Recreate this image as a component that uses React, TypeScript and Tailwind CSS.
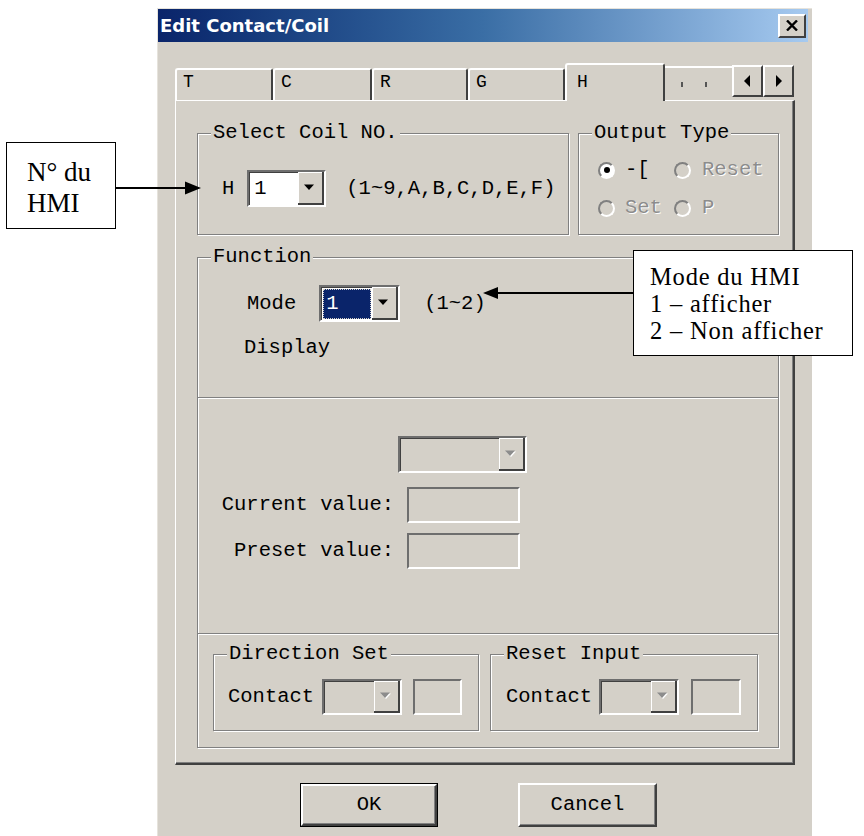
import React from "react";

// Win classic style dialog + two annotation callouts

const etched = "text-[#8c8c8c] [text-shadow:1px_1px_0_#fff]";

function DownArrow({ disabled }: { disabled?: boolean }) {
  return (
    <svg width="12" height="8" viewBox="0 0 12 8">
      {disabled && <path d="M1 1.5h10L6 7z" fill="#fff" />}
      <path d="M0 0.5h10L5 6z" fill={disabled ? "#8c8c8c" : "#000"} />
    </svg>
  );
}

function Combo({
  size,
  value,
  selected,
  disabled,
}: {
  size: string;
  value?: string;
  selected?: boolean;
  disabled?: boolean;
}) {
  return (
    <div
      className={`flex border-2 border-t-[#6e6e6e] border-l-[#6e6e6e] border-r-white border-b-white ${size}`}
    >
      <div
        className={`flex flex-1 items-stretch border-t border-l border-[#404040] p-[1px] ${
          disabled ? "bg-[#d4d0c8]" : "bg-white"
        }`}
      >
        {value && (
          <span
            className={`flex w-full items-center pl-[3px] ${
              selected ? "bg-[#0a246a] text-white outline-1 outline-dotted outline-[#d4d0c8] -outline-offset-1" : ""
            }`}
          >
            {value}
          </span>
        )}
      </div>
      <div className="flex w-[26px] items-center justify-center border-r-2 border-b-2 border-r-[#404040] border-b-[#404040] bg-[#d4d0c8] shadow-[inset_1px_1px_0_#fff]">
        <DownArrow disabled={disabled} />
      </div>
    </div>
  );
}

function TextBox({ size }: { size: string }) {
  return (
    <div
      className={`border-2 border-t-[#6e6e6e] border-l-[#6e6e6e] border-r-white border-b-white bg-[#d4d0c8] ${size}`}
    />
  );
}

function Radio({ checked }: { checked?: boolean }) {
  return (
    <span
      className={`flex h-[17px] w-[17px] shrink-0 items-center justify-center rounded-full border-2 border-t-[#808080] border-l-[#808080] border-r-white border-b-white ${
        checked ? "bg-white" : "bg-[#d4d0c8]"
      }`}
    >
      {checked && <span className="h-[6px] w-[6px] rounded-full bg-black" />}
    </span>
  );
}

function Group({
  label,
  className,
  children,
}: {
  label: string;
  className: string;
  children?: React.ReactNode;
}) {
  return (
    <div
      className={`flex flex-col border border-[#808080] shadow-[inset_1px_1px_0_#fff,1px_1px_0_#fff] ${className}`}
    >
      <div className="-mt-[11px] ml-[13px] h-[20px] w-fit bg-[#d4d0c8] px-[2px]">
        {label}
      </div>
      {children}
    </div>
  );
}

function Tab({ label, width }: { label: string; width: string }) {
  return (
    <div
      className={`h-[32px] rounded-t-[3px] border-t-2 border-l-2 border-r-2 border-t-white border-l-white border-r-[#404040] pl-[6px] pt-[2px] text-[18px] ${width}`}
    >
      {label}
    </div>
  );
}

function ScrollBtn({ dir }: { dir: "left" | "right" }) {
  return (
    <div className="mb-[3px] flex h-[32px] w-[31px] items-center justify-center border-2 border-t-white border-l-white border-r-[#404040] border-b-[#404040] bg-[#d4d0c8]">
      <svg width="7" height="12" viewBox="0 0 7 12">
        <path d={dir === "left" ? "M6 0v12L0 6z" : "M1 0v12l6-6z"} fill="#000" />
      </svg>
    </div>
  );
}

function Dialog() {
  return (
    <div className="ml-[157px] flex h-[840px] w-[655px] flex-col border-t border-l border-[#e6e3dc] bg-[#d4d0c8] pr-[4px] [font-family:'Liberation_Mono','Courier_New',monospace] text-[20.5px] leading-[20px] text-black">
      {/* title bar */}
      <div className="flex h-[33px] items-center justify-between bg-linear-to-r from-[#0a246a] via-[#3a6ea5] to-[#a6caf0] pl-[2px] pr-[2px]">
        <span className="[font-family:'DejaVu_Sans',sans-serif] text-[18px] font-bold text-white">
          Edit Contact/Coil
        </span>
        <div className="flex h-[24px] w-[28px] items-center justify-center border-2 border-t-white border-l-white border-r-[#404040] border-b-[#404040] bg-[#d4d0c8]">
          <svg width="12" height="11" viewBox="0 0 12 11">
            <path d="M1 0.5l10 10M11 0.5l-10 10" stroke="#000" strokeWidth="2.4" />
          </svg>
        </div>
      </div>

      {/* tabs */}
      <div className="ml-[17px] mt-[21px] flex h-[37px] items-end">
        <Tab label="T" width="w-[98px]" />
        <Tab label="C" width="w-[99px]" />
        <Tab label="R" width="w-[96px]" />
        <Tab label="G" width="w-[97px]" />
        <div className="relative z-10 -mb-[1px] h-[38px] w-[100px] rounded-t-[3px] border-t-2 border-l-2 border-r-2 border-t-white border-l-white border-r-[#404040] bg-[#d4d0c8] pl-[10px] pt-[7px] text-[18px]">
          H
        </div>
        <div className="flex h-[34px] w-[67px] items-center gap-[22px] border-t-2 border-t-white pl-[16px]">
          <span className="h-[5px] w-[2px] bg-[#555]" />
          <span className="h-[5px] w-[2px] bg-[#555]" />
        </div>
        <ScrollBtn dir="left" />
        <ScrollBtn dir="right" />
      </div>

      {/* panel */}
      <div className="ml-[17px] flex h-[665px] w-[620px] flex-col border-t border-l border-t-white border-l-white border-r-2 border-b-2 border-r-[#404040] border-b-[#404040] pl-[21px] pt-[32px] shadow-[inset_-1px_-1px_0_#808080]">
        <div className="flex gap-[9px]">
          <Group label="Select Coil NO." className="h-[102px] w-[372px]">
            <div className="mt-[27px] flex items-center pl-[24px]">
              <span>H</span>
              <Combo size="ml-[13px] w-[79px] h-[37px]" value="1" />
              <span className="ml-[20px]">(1~9,A,B,C,D,E,F)</span>
            </div>
          </Group>
          <Group label="Output Type" className="h-[102px] w-[201px]">
            <div className="mt-[17px] grid grid-cols-[76px_1fr] gap-y-[18px] pl-[19px]">
              <div className="flex items-center gap-[10px]">
                <Radio checked />
                <span>-[</span>
              </div>
              <div className="flex items-center gap-[11px]">
                <Radio />
                <span className={etched}>Reset</span>
              </div>
              <div className="flex items-center gap-[10px]">
                <Radio />
                <span className={etched}>Set</span>
              </div>
              <div className="flex items-center gap-[11px]">
                <Radio />
                <span className={etched}>P</span>
              </div>
            </div>
          </Group>
        </div>

        <div className="mt-[22px] flex h-[491px] w-[582px] flex-col border border-[#808080] shadow-[inset_1px_1px_0_#fff,1px_1px_0_#fff]">
          {/* Function */}
          <div className="flex h-[139px] flex-col">
            <div className="-mt-[11px] ml-[13px] h-[20px] w-fit bg-[#d4d0c8] px-[2px]">
              Function
            </div>
            <div className="mt-[18px] flex items-center pl-[49px]">
              <span>Mode</span>
              <Combo size="ml-[23px] w-[81px] h-[37px]" value="1" selected />
              <span className="ml-[24px]">(1~2)</span>
            </div>
            <div className="mt-[16px] pl-[46px]">Display</div>
          </div>

          {/* values */}
          <div className="flex h-[236px] flex-col border-t border-t-[#808080] shadow-[inset_0_1px_0_#fff]">
            <Combo size="ml-[200px] mt-[38px] w-[129px] h-[37px]" disabled />
            <div className="mt-[14px] flex items-center">
              <span className="w-[196px] text-right">Current value:</span>
              <TextBox size="ml-[13px] w-[113px] h-[36px]" />
            </div>
            <div className="mt-[10px] flex items-center">
              <span className="w-[196px] text-right">Preset value:</span>
              <TextBox size="ml-[13px] w-[113px] h-[36px]" />
            </div>
          </div>

          {/* direction / reset */}
          <div className="flex flex-1 flex-col border-t border-t-[#808080] shadow-[inset_0_1px_0_#fff]">
            <div className="ml-[15px] mt-[20px] flex gap-[11px]">
              <Group label="Direction Set" className="h-[77px] w-[266px]">
                <div className="mt-[15px] flex items-center pl-[14px]">
                  <span>Contact</span>
                  <Combo size="ml-[8px] w-[80px] h-[36px]" disabled />
                  <TextBox size="ml-[11px] w-[49px] h-[36px]" />
                </div>
              </Group>
              <Group label="Reset Input" className="h-[77px] w-[268px]">
                <div className="mt-[15px] flex items-center pl-[15px]">
                  <span>Contact</span>
                  <Combo size="ml-[7px] w-[80px] h-[36px]" disabled />
                  <TextBox size="ml-[12px] w-[50px] h-[36px]" />
                </div>
              </Group>
            </div>
          </div>
        </div>
      </div>

      {/* buttons */}
      <div className="ml-[142px] mt-[18px] flex gap-[80px]">
        <div className="flex h-[44px] w-[138px] items-center justify-center border border-black">
          <div className="flex h-full w-full items-center justify-center border-2 border-t-white border-l-white border-r-[#404040] border-b-[#404040] shadow-[inset_-1px_-1px_0_#808080]">
            OK
          </div>
        </div>
        <div className="flex h-[44px] w-[139px] items-center justify-center border-2 border-t-white border-l-white border-r-[#404040] border-b-[#404040] shadow-[inset_-1px_-1px_0_#808080]">
          Cancel
        </div>
      </div>
    </div>
  );
}

export default function App() {
  return (
    <div className="relative h-[836px] w-[864px] overflow-hidden bg-white pt-[8px]">
      <Dialog />

      {/* callout: coil number */}
      <div className="absolute left-[6px] top-[142px] h-[87px] w-[110px] border-[1.5px] border-black bg-white pl-[20px] pt-[14px] [font-family:'Liberation_Serif','Times_New_Roman',serif] text-[27px] leading-[31px] text-black">
        <div>N° du</div>
        <div>HMI</div>
      </div>
      <svg className="absolute left-[115px] top-[181px]" width="88" height="14" viewBox="0 0 88 14">
        <path d="M0 7h74" stroke="#000" strokeWidth="2" />
        <path d="M70 0.5L86 7L70 13.5z" fill="#000" />
      </svg>

      {/* callout: mode */}
      <div className="absolute left-[633px] top-[250px] h-[106px] w-[220px] border-[1.5px] border-black bg-white pl-[16px] pt-[12px] [font-family:'Liberation_Serif','Times_New_Roman',serif] text-[24.5px] leading-[27.2px] tracking-[0.8px] text-black">
        <div>Mode du HMI</div>
        <div>1 – afficher</div>
        <div>2 – Non afficher</div>
      </div>
      <svg className="absolute left-[482px] top-[286px]" width="152" height="14" viewBox="0 0 152 14">
        <path d="M12 7h140" stroke="#000" strokeWidth="2" />
        <path d="M1 7L16 1V13z" fill="#000" />
      </svg>
    </div>
  );
}
